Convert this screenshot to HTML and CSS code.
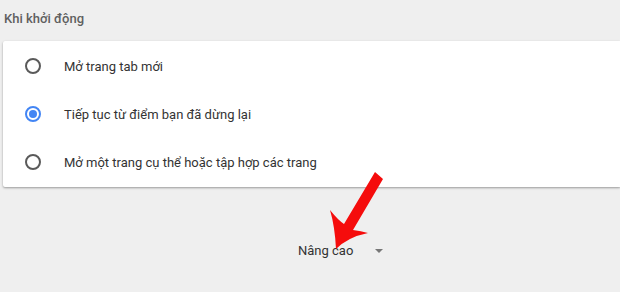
FILE: index.html
```html
<!DOCTYPE html>
<html lang="vi">
<head>
<meta charset="utf-8">
<link rel="stylesheet" href="styles.css">
</head>
<body>
<div class="page">
  <h2 class="section-title">Khi khởi động</h2>
  <div class="card">
    <label class="row"><span class="radio"></span><span class="label">Mở trang tab mới</span></label>
    <label class="row"><span class="radio checked"></span><span class="label">Tiếp tục từ điểm bạn đã dừng lại</span></label>
    <label class="row"><span class="radio"></span><span class="label">Mở một trang cụ thể hoặc tập hợp các trang</span></label>
  </div>
  <div class="advanced">
    <span class="adv-label">Nâng cao</span>
    <span class="caret"></span>
  </div>
  <svg class="arrow" width="70" height="90" viewBox="0 0 70 90">
    <path fill="#f50c0c" d="M55,7 L63,14 L33,65 Q41,66 48,68 Q28,72 16,84 Q15,62 10,45 Q18,55 24,59 Z"/>
  </svg>
</div>
</body>
</html>
```
FILE: styles.css
```css
html, body {
  margin: 0;
  padding: 0;
  background: #efefef;
  font-family: Roboto, "Noto Sans", Arial, sans-serif;
}
.page {
  position: relative;
  width: 620px;
  height: 292px;
  overflow: hidden;
}
.section-title {
  margin: 0;
  padding: 11px 0 0 4px;
  height: 30px;
  box-sizing: border-box;
  font-size: 13px;
  font-weight: 500;
  color: #5f5f5f;
}
.card {
  margin-left: 3px;
  margin-top: 11px;
  background: #fff;
  border-radius: 2px 0 0 2px;
  box-shadow: 0 1px 2px rgba(0,0,0,0.25), 0 1px 3px rgba(0,0,0,0.12);
  padding: 1px 0;
}
.row {
  display: flex;
  align-items: center;
  height: 48px;
  padding-left: 22px;
}
.radio {
  width: 12px;
  height: 12px;
  border: 2px solid #5a5a5a;
  border-radius: 50%;
  box-sizing: content-box;
  position: relative;
  flex: none;
}
.radio.checked {
  border-color: #4285f4;
}
.radio.checked::after {
  content: "";
  position: absolute;
  left: 2px;
  top: 2px;
  width: 8px;
  height: 8px;
  border-radius: 50%;
  background: #4285f4;
}
.label {
  margin-left: 23px;
  font-size: 13px;
  color: #333;
}
.advanced {
  display: flex;
  align-items: center;
  margin-top: 56px;
  padding-left: 298px;
  gap: 22px;
}
.adv-label {
  font-size: 13px;
  color: #333;
}
.caret {
  width: 0;
  height: 0;
  border-left: 4px solid transparent;
  border-right: 4px solid transparent;
  border-top: 4px solid #777;
}
.arrow {
  position: absolute;
  left: 320px;
  top: 165px;
}
```
